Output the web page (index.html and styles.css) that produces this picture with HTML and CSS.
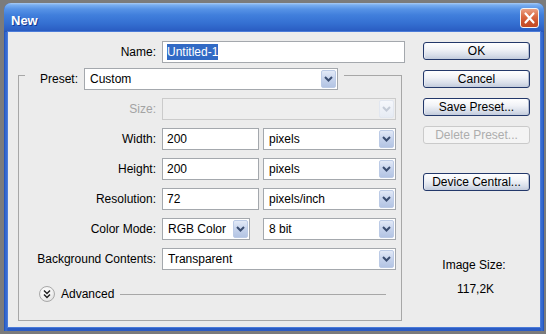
FILE: index.html
```html
<!DOCTYPE html>
<html>
<head>
<meta charset="utf-8">
<title>New</title>
<link rel="stylesheet" href="styles.css">
</head>
<body>
<div class="window">
  <div class="titlebar">
    <span class="title">New</span>
    <div class="close">
      <svg width="17" height="18" viewBox="0 0 17 18"><path d="M4.5 4.5 L12.5 13.5 M12.5 4.5 L4.5 13.5" stroke="#fff" stroke-width="2.2" stroke-linecap="round"/></svg>
    </div>
  </div>
  <div class="client">
    <div class="form">
      <div class="name-row">
        <span class="lbl lbl-outer">Name:</span>
        <div class="field w-name"><span class="selected">Untitled-1</span></div>
      </div>
      <div class="group">
        <div class="preset">
          <span class="plabel">Preset:</span>
          <div class="combo w-preset"><span class="val">Custom</span><span class="drop"><svg width="9" height="6" viewBox="0 0 9 6"><path d="M1 1 L4.5 4.5 L8 1" fill="none" stroke="#3a4d70" stroke-width="2"/></svg></span></div>
        </div>
        <div class="row">
          <span class="lbl disabled">Size:</span>
          <div class="combo off w-full"><span class="val"></span><span class="drop"><svg width="9" height="6" viewBox="0 0 9 6"><path d="M1 1 L4.5 4.5 L8 1" fill="none" stroke="#c3cad6" stroke-width="2"/></svg></span></div>
        </div>
        <div class="row">
          <span class="lbl">Width:</span>
          <div class="field w-num">200</div>
          <div class="combo w-unit"><span class="val">pixels</span><span class="drop"><svg width="9" height="6" viewBox="0 0 9 6"><path d="M1 1 L4.5 4.5 L8 1" fill="none" stroke="#3a4d70" stroke-width="2"/></svg></span></div>
        </div>
        <div class="row">
          <span class="lbl">Height:</span>
          <div class="field w-num">200</div>
          <div class="combo w-unit"><span class="val">pixels</span><span class="drop"><svg width="9" height="6" viewBox="0 0 9 6"><path d="M1 1 L4.5 4.5 L8 1" fill="none" stroke="#3a4d70" stroke-width="2"/></svg></span></div>
        </div>
        <div class="row">
          <span class="lbl">Resolution:</span>
          <div class="field w-num">72</div>
          <div class="combo w-unit"><span class="val">pixels/inch</span><span class="drop"><svg width="9" height="6" viewBox="0 0 9 6"><path d="M1 1 L4.5 4.5 L8 1" fill="none" stroke="#3a4d70" stroke-width="2"/></svg></span></div>
        </div>
        <div class="row">
          <span class="lbl">Color Mode:</span>
          <div class="combo w-mode"><span class="val">RGB Color</span><span class="drop"><svg width="9" height="6" viewBox="0 0 9 6"><path d="M1 1 L4.5 4.5 L8 1" fill="none" stroke="#3a4d70" stroke-width="2"/></svg></span></div>
          <div class="combo w-unit gap-wide"><span class="val">8 bit</span><span class="drop"><svg width="9" height="6" viewBox="0 0 9 6"><path d="M1 1 L4.5 4.5 L8 1" fill="none" stroke="#3a4d70" stroke-width="2"/></svg></span></div>
        </div>
        <div class="row">
          <span class="lbl">Background Contents:</span>
          <div class="combo w-full"><span class="val">Transparent</span><span class="drop"><svg width="9" height="6" viewBox="0 0 9 6"><path d="M1 1 L4.5 4.5 L8 1" fill="none" stroke="#3a4d70" stroke-width="2"/></svg></span></div>
        </div>
        <div class="advanced">
          <span class="adv-btn"><svg width="10" height="10" viewBox="0 0 10 10"><path d="M2 1.5 L5 4.5 L8 1.5 M2 5.5 L5 8.5 L8 5.5" fill="none" stroke="#222" stroke-width="1.5"/></svg></span>
          <span class="adv-text">Advanced</span>
          <span class="rule"></span>
        </div>
      </div>
    </div>
    <div class="side">
      <div class="btn">OK</div>
      <div class="btn">Cancel</div>
      <div class="btn">Save Preset...</div>
      <div class="btn btn-off">Delete Preset...</div>
      <div class="btn btn-device">Device Central...</div>
      <div class="info">Image Size:</div>
      <div class="info info-val">117,2K</div>
    </div>
  </div>
</div>
</body>
</html>
```

FILE: styles.css
```css
html, body {
  margin: 0;
  padding: 0;
}
body {
  background: #7b7b7b;
  font-family: "Liberation Sans", Arial, sans-serif;
  font-size: 12px;
  color: #000;
  height: 334px;
  overflow: hidden;
}
.window {
  margin: 3px 2px 0 4px;
  width: 540px;
  height: 328px;
  box-sizing: border-box;
  background: linear-gradient(to right, #1f4fb6, #3a6fd6 2px, #2b5cc4 4px, #2b5cc4 536px, #3a6fd6 538px, #1f4fb6);
  border-radius: 7px 7px 0 0;
  display: flex;
  flex-direction: column;
}
.titlebar {
  height: 29px;
  flex: none;
  box-sizing: border-box;
  border-radius: 7px 7px 0 0;
  background: linear-gradient(to bottom, #a9cbf5 0px, #79aef0 2px, #5793e6 6px, #417fdc 12px, #3570d2 20px, #2b5fc4 27px, #2453b8 29px);
  display: flex;
  align-items: flex-start;
  justify-content: space-between;
  padding: 0 5px 0 7px;
}
.title {
  margin-top: 10px;
  font-weight: bold;
  font-size: 13px;
  line-height: 15px;
  color: #fff;
  text-shadow: 1px 1px 0 #123a94;
}
.close {
  margin-top: 5px;
  width: 19px;
  height: 20px;
  box-sizing: border-box;
  border: 1px solid #f4f4f4;
  border-radius: 3px;
  background: linear-gradient(to bottom, #eba184, #dc6c44 40%, #c9502a 75%, #c44a24);
  display: flex;
  align-items: center;
  justify-content: center;
}
.client {
  flex: 1;
  margin: 0 4px 4px;
  background: #ececec;
  display: flex;
  padding: 9px 0 0 10px;
  box-sizing: border-box;
  box-shadow: 0 0 0 1px #4b7bd8;
}
.form {
  width: 387px;
  display: flex;
  flex-direction: column;
}
.name-row {
  display: flex;
  align-items: center;
  height: 22px;
}
.lbl {
  width: 137px;
  margin-right: 6px;
  text-align: right;
  white-space: nowrap;
}
.lbl-outer {
  width: 138px;
}
.lbl.disabled {
  color: #a3a3a3;
}
.field {
  height: 22px;
  box-sizing: border-box;
  border: 1px solid #a4a8ad;
  background: #fff;
  line-height: 20px;
  padding-left: 4px;
}
.w-name { width: 243px; }
.w-num { width: 97px; }
.selected {
  background: #316ac5;
  color: #fff;
  padding: 1px 0;
}
.group {
  margin-top: 12px;
  width: 384px;
  box-sizing: border-box;
  border: 1px solid #a7a7a7;
  display: flex;
  flex-direction: column;
  align-items: flex-start;
  padding-bottom: 18px;
}
.preset {
  margin: -8px 0 0 6px;
  padding: 0 6px 0 15px;
  background: #ececec;
  display: flex;
  align-items: center;
  height: 22px;
}
.plabel {
  width: 39px;
  margin-right: 5px;
}
.row {
  display: flex;
  align-items: center;
  margin-top: 8px;
  height: 22px;
}
.combo {
  height: 22px;
  box-sizing: border-box;
  border: 1px solid #a4a8ad;
  background: #fff;
  padding: 1px;
  display: flex;
}
.combo .val {
  flex: 1;
  padding-left: 4px;
  line-height: 18px;
  white-space: nowrap;
  overflow: hidden;
}
.combo .drop {
  width: 15px;
  box-sizing: border-box;
  border: 1px solid #bccbe6;
  border-radius: 2px;
  background: linear-gradient(to bottom, #e3eaf7, #c6d3ec 50%, #b3c4e3);
  display: flex;
  align-items: center;
  justify-content: center;
}
.combo.off {
  border-color: #cbcbcb;
  background: #eeeeee;
}
.combo.off .drop {
  border-color: #e2e7f0;
  background: linear-gradient(to bottom, #f5f7fb, #e6ebf3);
}
.w-preset { width: 254px; }
.w-full { width: 234px; }
.w-unit { width: 133px; margin-left: 4px; }
.w-mode { width: 88px; }
.gap-wide { margin-left: 13px; }
.advanced {
  align-self: stretch;
  margin-top: 16px;
  height: 16px;
  display: flex;
  align-items: center;
  padding: 0 15px 0 20px;
}
.adv-btn {
  width: 16px;
  height: 16px;
  box-sizing: border-box;
  border: 1px solid #a9a9a9;
  border-radius: 50%;
  background: radial-gradient(circle at 40% 35%, #ffffff, #f2f2f2 50%, #d4d4d4);
  display: flex;
  align-items: center;
  justify-content: center;
}
.adv-text {
  margin-left: 6px;
}
.rule {
  flex: 1;
  height: 1px;
  background: #a7a7a7;
  margin-left: 6px;
}
.side {
  margin-left: 18px;
  width: 107px;
  display: flex;
  flex-direction: column;
  padding-top: 1px;
}
.btn {
  height: 18px;
  box-sizing: border-box;
  border: 1px solid #23386a;
  border-radius: 3px;
  background: linear-gradient(to bottom, #ffffff, #f1f3f7 40%, #d9dfea 75%, #c2cbdc);
  box-shadow: inset 1px 0 0 #e9edf4, inset -1px 0 0 #b6c0d3;
  text-align: center;
  line-height: 16px;
  margin-bottom: 10px;
}
.btn-off {
  border-color: #cacaca;
  background: #f4f4f4;
  box-shadow: none;
  color: #adadad;
}
.btn-device {
  margin-top: 19px;
}
.info {
  text-align: center;
  line-height: 14px;
  margin-top: 57px;
  padding-right: 5px;
}
.info-val {
  margin-top: 10px;
  padding-right: 2px;
}
```
